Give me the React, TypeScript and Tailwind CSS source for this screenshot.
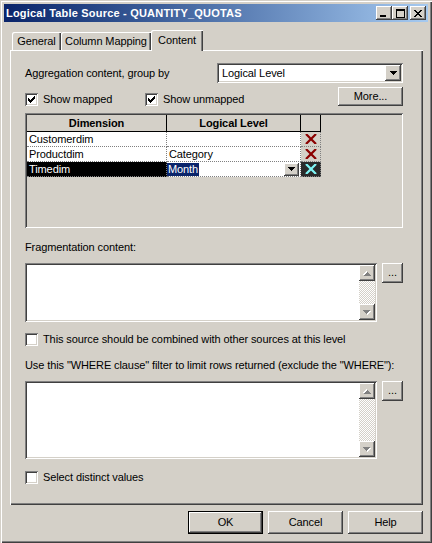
import React from 'react';

const raised = "shadow-[inset_-1px_-1px_0_#404040,inset_1px_1px_0_#ffffff,inset_-2px_-2px_0_#808080]";
const sunken = "shadow-[inset_1px_1px_0_#808080,inset_-1px_-1px_0_#ffffff,inset_2px_2px_0_#404040,inset_-2px_-2px_0_#d4d0c8]";

const DownArrow = ({ color = '#000' }: { color?: string }) => (
    <svg width="7" height="4" viewBox="0 0 7 4">
        <path d="M0 0h7v1H0zM1 1h5v1H1zM2 2h3v1H2zM3 3h1v1H3z" fill={color} />
    </svg>
);

const DisabledArrow = ({ up }: { up?: boolean }) => (
    <svg width="8" height="5" viewBox="0 0 8 5" className={up ? 'rotate-180' : ''}>
        <path d="M1 1h7v1H1zM2 2h5v1H2zM3 3h3v1H3zM4 4h1v1H4z" fill="#ffffff" />
        <path d="M0 0h7v1H0zM1 1h5v1H1zM2 2h3v1H2zM3 3h1v1H3z" fill="#808080" />
    </svg>
);

const Check = () => (
    <svg width="7" height="7" viewBox="0 0 7 7">
        <path d="M0 2h1v3H0zM1 3h1v3H1zM2 4h1v3H2zM3 3h1v3H3zM4 2h1v3H4zM5 1h1v3H5zM6 0h1v3H6z" fill="#000" />
    </svg>
);

const Checkbox = ({ checked, label }: { checked?: boolean; label: string }) => (
    <div className="flex items-center gap-[5px]">
        <div className={`w-[13px] h-[13px] bg-white flex items-center justify-center ${sunken}`}>
            {checked && <Check />}
        </div>
        <span className="leading-[13px]">{label}</span>
    </div>
);

const CrossMark = ({ color }: { color: string }) => (
    <svg width="12" height="10" viewBox="0 0 12 10">
        <path d="M1 0L11 10M11 0L1 10" stroke={color} strokeWidth="2.2" />
    </svg>
);

const TextArea = ({ h }: { h: string }) => (
    <div className="flex">
        <div className={`w-[352px] ${h} bg-white p-[2px] flex ${sunken}`}>
            <div className="flex-1" />
            <div className="w-[16px] flex flex-col">
                <div className={`h-[16px] bg-[#d4d0c8] flex items-center justify-center ${raised}`}>
                    <DisabledArrow up />
                </div>
                <div className="flex-1 bg-[repeating-conic-gradient(#d4d0c8_0%_25%,#ffffff_0%_50%)] bg-[length:2px_2px]" />
                <div className={`h-[16px] bg-[#d4d0c8] flex items-center justify-center ${raised}`}>
                    <DisabledArrow />
                </div>
            </div>
        </div>
        <button className={`ml-[5px] w-[21px] h-[20px] bg-[#d4d0c8] flex items-center justify-center pb-[2px] ${raised}`}>...</button>
    </div>
);

export default function App() {
    return (
        <div className="w-[432px] h-[543px] bg-[#d4d0c8] p-[4px] flex flex-col text-[11px] tracking-[-0.1px] text-black font-['Liberation_Sans',Arial,sans-serif] shadow-[inset_1px_1px_0_#d4d0c8,inset_2px_2px_0_#ffffff,inset_-1px_-1px_0_#404040,inset_-2px_-2px_0_#808080]">
            {/* Title bar */}
            <div className="h-[18px] flex items-center bg-gradient-to-r from-[#0a246a] to-[#a6caf0] pl-[2px] pr-[2px]">
                <span className="text-white font-bold text-[11px] tracking-[0.2px]">Logical Table Source - QUANTITY_QUOTAS</span>
                <div className="ml-auto flex items-center">
                    <div className={`w-[16px] h-[14px] bg-[#d4d0c8] flex items-end pl-[4px] pb-[3px] ${raised}`}>
                        <div className="w-[6px] h-[2px] bg-black" />
                    </div>
                    <div className={`w-[16px] h-[14px] bg-[#d4d0c8] flex items-center justify-center ${raised}`}>
                        <div className="w-[9px] h-[9px] border border-black border-t-2" />
                    </div>
                    <div className={`ml-[2px] w-[16px] h-[14px] bg-[#d4d0c8] flex items-center justify-center ${raised}`}>
                        <svg width="8" height="7" viewBox="0 0 8 7">
                            <path d="M0 0h2v1H0zM6 0h2v1H6zM1 1h2v1H1zM5 1h2v1H5zM2 2h4v1H2zM3 3h2v1H3zM2 4h4v1H2zM1 5h2v1H1zM5 5h2v1H5zM0 6h2v1H0zM6 6h2v1H6z" fill="#000" />
                        </svg>
                    </div>
                </div>
            </div>

            <div className="ml-[6px] mt-[8px] flex flex-col">
                {/* Tabs */}
                <div className="flex items-end h-[20px] pl-[2px]">
                    <div className="w-[49px] h-[18px] flex items-center justify-center pt-[1px] rounded-tl-[2px] shadow-[inset_1px_1px_0_#ffffff,inset_-1px_0_0_#404040,inset_-2px_0_0_#808080]">General</div>
                    <div className="w-[90px] h-[18px] flex items-center justify-center pt-[1px] rounded-tl-[2px] shadow-[inset_1px_1px_0_#ffffff,inset_-1px_0_0_#404040,inset_-2px_0_0_#808080]">Column Mapping</div>
                    <div className="relative z-10 w-[52px] h-[21px] -mb-[1px] bg-[#d4d0c8] flex items-center justify-center rounded-tl-[2px] shadow-[inset_1px_1px_0_#ffffff,inset_-1px_0_0_#404040,inset_-2px_0_0_#808080]">Content</div>
                </div>

                {/* Panel */}
                <div className="w-[413px] h-[455px] pt-[13px] pl-[15px] pr-[20px] flex flex-col shadow-[inset_1px_1px_0_#ffffff,inset_-1px_-1px_0_#404040,inset_-2px_-2px_0_#808080]">
                    <div className="h-[20px] flex items-center">
                        <span>Aggregation content, group by</span>
                        <div className={`ml-auto w-[186px] h-[20px] bg-white p-[2px] flex items-center ${sunken}`}>
                            <span className="flex-1 pl-[3px]">Logical Level</span>
                            <div className={`w-[16px] h-[16px] bg-[#d4d0c8] flex items-center justify-center ${raised}`}>
                                <DownArrow />
                            </div>
                        </div>
                    </div>

                    <div className="mt-[4px] h-[19px] flex items-end">
                        <div className="w-[120px]"><Checkbox checked label="Show mapped" /></div>
                        <Checkbox checked label="Show unmapped" />
                        <button className={`ml-auto w-[65px] h-[19px] bg-[#d4d0c8] flex items-center justify-center ${raised}`}>More...</button>
                    </div>

                    {/* Grid */}
                    <div className={`mt-[7px] w-[378px] h-[115px] bg-[#d4d0c8] p-[2px] flex flex-col ${sunken}`}>
                        <div className="flex h-[17px]">
                            <div className="w-[140px] border-r border-b border-black font-bold flex items-center justify-center">Dimension</div>
                            <div className="w-[134px] border-r border-b border-black font-bold flex items-center justify-center">Logical Level</div>
                            <div className="w-[20px] border-r border-b border-black" />
                        </div>
                        <div className="flex h-[15px]">
                            <div className="w-[140px] bg-white border-r border-b border-dotted border-[#808080] pl-[2px] leading-[14px]">Customerdim</div>
                            <div className="w-[134px] bg-white border-r border-b border-dotted border-[#808080]" />
                            <div className="w-[20px] border-r border-b border-dotted border-[#808080] flex items-center justify-center"><CrossMark color="#8b0000" /></div>
                        </div>
                        <div className="flex h-[15px]">
                            <div className="w-[140px] bg-white border-r border-b border-dotted border-[#808080] pl-[2px] leading-[14px]">Productdim</div>
                            <div className="w-[134px] bg-white border-r border-b border-dotted border-[#808080] pl-[2px] leading-[14px]">Category</div>
                            <div className="w-[20px] border-r border-b border-dotted border-[#808080] flex items-center justify-center"><CrossMark color="#8b0000" /></div>
                        </div>
                        <div className="flex h-[15px]">
                            <div className="w-[140px] bg-black text-white border-r border-b border-dotted border-[#808080] pl-[2px] leading-[14px]">Timedim</div>
                            <div className="w-[134px] bg-white border-r border-b border-dotted border-[#808080] flex items-center">
                                <span className="bg-[#0a246a] text-white leading-[13px] px-[1px]">Month</span>
                                <div className={`ml-auto mr-[1px] w-[15px] h-[13px] bg-[#d4d0c8] flex items-center justify-center ${raised}`}>
                                    <DownArrow />
                                </div>
                            </div>
                            <div className="w-[20px] bg-[#2a2a2a] border-r border-b border-dotted border-[#808080] flex items-center justify-center"><CrossMark color="#7ff5f5" /></div>
                        </div>
                    </div>

                    <div className="mt-[12px] h-[14px] leading-[14px]">Fragmentation content:</div>
                    <div className="mt-[9px]"><TextArea h="h-[59px]" /></div>

                    <div className="mt-[11px]"><Checkbox label="This source should be combined with other sources at this level" /></div>

                    <div className="mt-[12px] h-[14px] leading-[14px]">Use this "WHERE clause" filter to limit rows returned (exclude the "WHERE"):</div>
                    <div className="mt-[9px]"><TextArea h="h-[78px]" /></div>

                    <div className="mt-[12px]"><Checkbox label="Select distinct values" /></div>
                </div>

                {/* Buttons */}
                <div className="mt-[6px] w-[413px] flex justify-end gap-[5px]">
                    <button className="w-[75px] h-[23px] bg-[#d4d0c8] border border-black flex items-center justify-center shadow-[inset_-1px_-1px_0_#404040,inset_1px_1px_0_#ffffff,inset_-2px_-2px_0_#808080]">OK</button>
                    <button className={`w-[75px] h-[23px] bg-[#d4d0c8] flex items-center justify-center ${raised}`}>Cancel</button>
                    <button className={`w-[75px] h-[23px] bg-[#d4d0c8] flex items-center justify-center ${raised}`}>Help</button>
                </div>
            </div>
        </div>
    );
}
